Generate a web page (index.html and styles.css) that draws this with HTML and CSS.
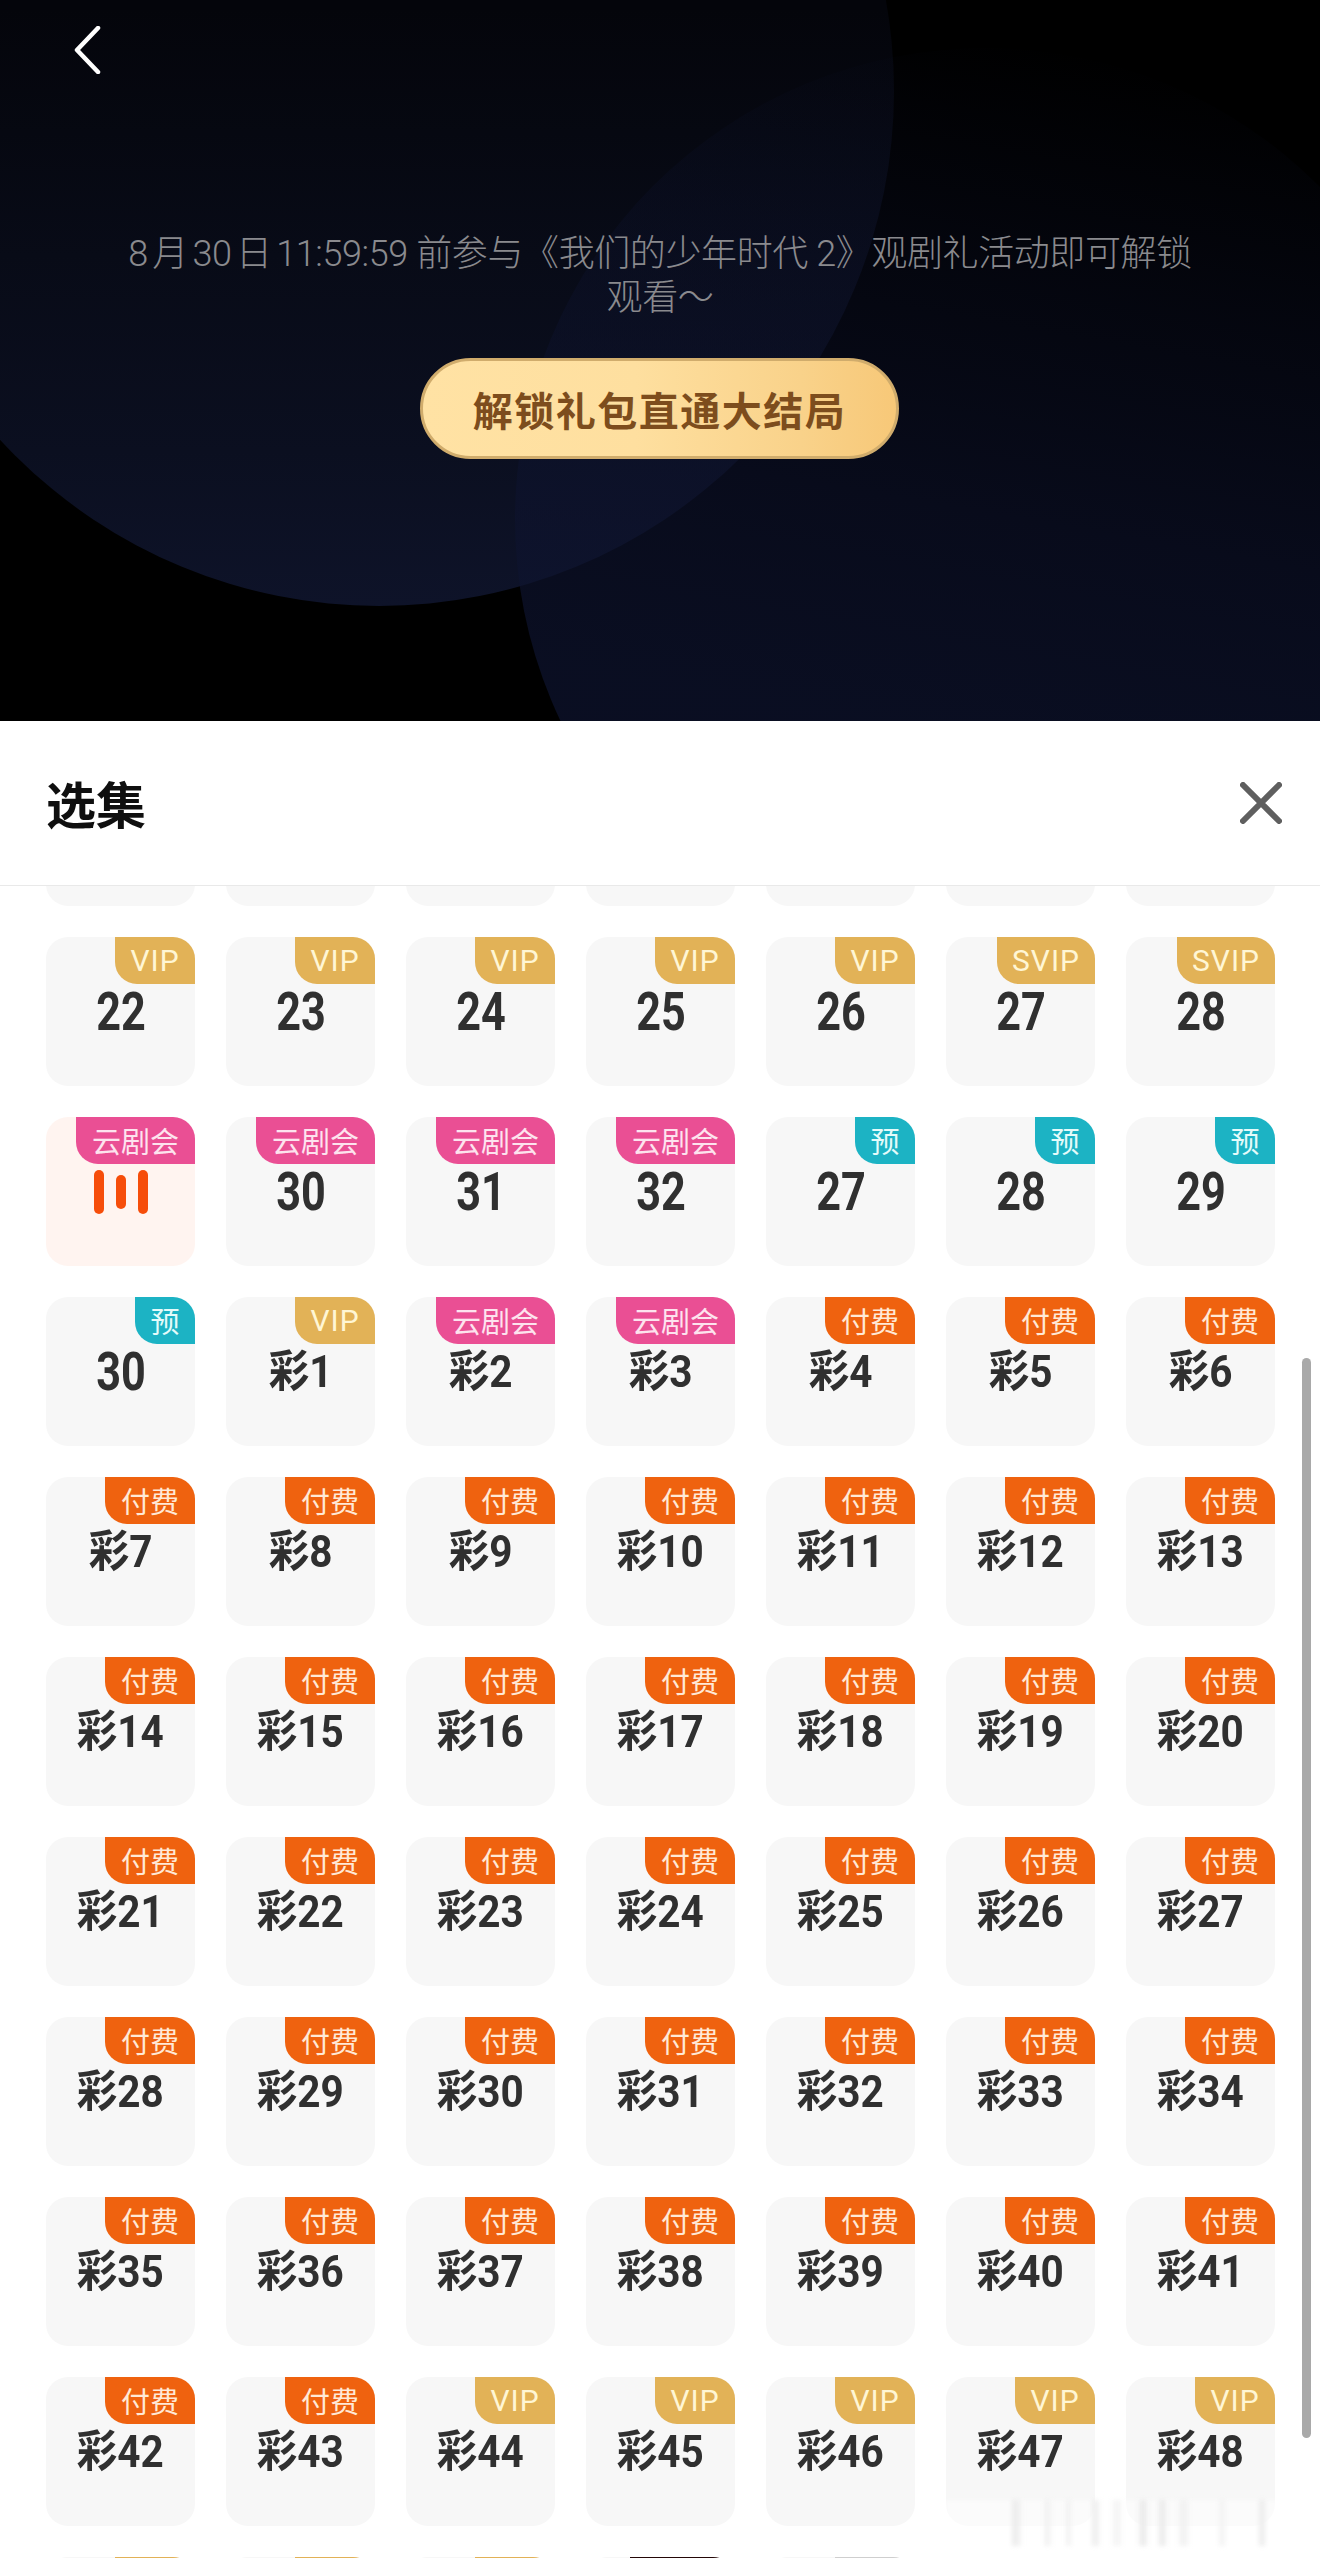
FILE: index.html
```html
<!DOCTYPE html>
<html lang="zh-CN">
<head>
<meta charset="utf-8">
<title>选集</title>
<link rel="stylesheet" href="styles.css">
</head>
<body>
<section class="hero">
  <div class="orb orb-left"></div>
  <div class="orb orb-right"></div>
  <button class="back" aria-label="返回">
    <svg width="28" height="48" viewBox="0 0 28 48"><path d="M25 2 L4 24 L25 46" class="back-line"/></svg>
  </button>
  <div class="unlock">
    <p class="unlock-text">8月30日11:59:59 前参与《我们的少年时代 2》观剧礼活动即可解锁观看～</p>
    <button class="unlock-btn">解锁礼包直通大结局</button>
  </div>
</section>
<section class="sheet">
  <header class="sheet-head">
    <h1 class="sheet-title">选集</h1>
    <button class="close" aria-label="关闭">
      <svg width="42" height="42" viewBox="0 0 42 42"><path d="M3 3 L39 39 M39 3 L3 39" class="close-line"/></svg>
    </button>
  </header>
  <div class="list">
    <div class="grid">
      <div class="ep"></div><div class="ep"></div><div class="ep"></div><div class="ep"></div><div class="ep"></div><div class="ep"></div><div class="ep"></div>

      <div class="ep"><span class="tag vip">VIP</span><span class="num">22</span></div>
      <div class="ep"><span class="tag vip">VIP</span><span class="num">23</span></div>
      <div class="ep"><span class="tag vip">VIP</span><span class="num">24</span></div>
      <div class="ep"><span class="tag vip">VIP</span><span class="num">25</span></div>
      <div class="ep"><span class="tag vip">VIP</span><span class="num">26</span></div>
      <div class="ep"><span class="tag svip">SVIP</span><span class="num">27</span></div>
      <div class="ep"><span class="tag svip">SVIP</span><span class="num">28</span></div>

      <div class="ep ep-on"><span class="tag club">云剧会</span><span class="bars"><i class="bar"></i><i class="bar bar-mid"></i><i class="bar"></i></span></div>
      <div class="ep"><span class="tag club">云剧会</span><span class="num">30</span></div>
      <div class="ep"><span class="tag club">云剧会</span><span class="num">31</span></div>
      <div class="ep"><span class="tag club">云剧会</span><span class="num">32</span></div>
      <div class="ep"><span class="tag pre">预</span><span class="num">27</span></div>
      <div class="ep"><span class="tag pre">预</span><span class="num">28</span></div>
      <div class="ep"><span class="tag pre">预</span><span class="num">29</span></div>

      <div class="ep"><span class="tag pre">预</span><span class="num">30</span></div>
      <div class="ep"><span class="tag vip">VIP</span><span class="num cai">彩1</span></div>
      <div class="ep"><span class="tag club">云剧会</span><span class="num cai">彩2</span></div>
      <div class="ep"><span class="tag club">云剧会</span><span class="num cai">彩3</span></div>
      <div class="ep"><span class="tag pay">付费</span><span class="num cai">彩4</span></div>
      <div class="ep"><span class="tag pay">付费</span><span class="num cai">彩5</span></div>
      <div class="ep"><span class="tag pay">付费</span><span class="num cai">彩6</span></div>

      <div class="ep"><span class="tag pay">付费</span><span class="num cai">彩7</span></div>
      <div class="ep"><span class="tag pay">付费</span><span class="num cai">彩8</span></div>
      <div class="ep"><span class="tag pay">付费</span><span class="num cai">彩9</span></div>
      <div class="ep"><span class="tag pay">付费</span><span class="num cai">彩10</span></div>
      <div class="ep"><span class="tag pay">付费</span><span class="num cai">彩11</span></div>
      <div class="ep"><span class="tag pay">付费</span><span class="num cai">彩12</span></div>
      <div class="ep"><span class="tag pay">付费</span><span class="num cai">彩13</span></div>

      <div class="ep"><span class="tag pay">付费</span><span class="num cai">彩14</span></div>
      <div class="ep"><span class="tag pay">付费</span><span class="num cai">彩15</span></div>
      <div class="ep"><span class="tag pay">付费</span><span class="num cai">彩16</span></div>
      <div class="ep"><span class="tag pay">付费</span><span class="num cai">彩17</span></div>
      <div class="ep"><span class="tag pay">付费</span><span class="num cai">彩18</span></div>
      <div class="ep"><span class="tag pay">付费</span><span class="num cai">彩19</span></div>
      <div class="ep"><span class="tag pay">付费</span><span class="num cai">彩20</span></div>

      <div class="ep"><span class="tag pay">付费</span><span class="num cai">彩21</span></div>
      <div class="ep"><span class="tag pay">付费</span><span class="num cai">彩22</span></div>
      <div class="ep"><span class="tag pay">付费</span><span class="num cai">彩23</span></div>
      <div class="ep"><span class="tag pay">付费</span><span class="num cai">彩24</span></div>
      <div class="ep"><span class="tag pay">付费</span><span class="num cai">彩25</span></div>
      <div class="ep"><span class="tag pay">付费</span><span class="num cai">彩26</span></div>
      <div class="ep"><span class="tag pay">付费</span><span class="num cai">彩27</span></div>

      <div class="ep"><span class="tag pay">付费</span><span class="num cai">彩28</span></div>
      <div class="ep"><span class="tag pay">付费</span><span class="num cai">彩29</span></div>
      <div class="ep"><span class="tag pay">付费</span><span class="num cai">彩30</span></div>
      <div class="ep"><span class="tag pay">付费</span><span class="num cai">彩31</span></div>
      <div class="ep"><span class="tag pay">付费</span><span class="num cai">彩32</span></div>
      <div class="ep"><span class="tag pay">付费</span><span class="num cai">彩33</span></div>
      <div class="ep"><span class="tag pay">付费</span><span class="num cai">彩34</span></div>

      <div class="ep"><span class="tag pay">付费</span><span class="num cai">彩35</span></div>
      <div class="ep"><span class="tag pay">付费</span><span class="num cai">彩36</span></div>
      <div class="ep"><span class="tag pay">付费</span><span class="num cai">彩37</span></div>
      <div class="ep"><span class="tag pay">付费</span><span class="num cai">彩38</span></div>
      <div class="ep"><span class="tag pay">付费</span><span class="num cai">彩39</span></div>
      <div class="ep"><span class="tag pay">付费</span><span class="num cai">彩40</span></div>
      <div class="ep"><span class="tag pay">付费</span><span class="num cai">彩41</span></div>

      <div class="ep"><span class="tag pay">付费</span><span class="num cai">彩42</span></div>
      <div class="ep"><span class="tag pay">付费</span><span class="num cai">彩43</span></div>
      <div class="ep"><span class="tag vip">VIP</span><span class="num cai">彩44</span></div>
      <div class="ep"><span class="tag vip">VIP</span><span class="num cai">彩45</span></div>
      <div class="ep"><span class="tag vip">VIP</span><span class="num cai">彩46</span></div>
      <div class="ep"><span class="tag vip">VIP</span><span class="num cai">彩47</span></div>
      <div class="ep"><span class="tag vip">VIP</span><span class="num cai">彩48</span></div>

      <div class="ep"><span class="tag tag-sliver peek-gold"></span></div>
      <div class="ep"><span class="tag tag-sliver peek-gold"></span></div>
      <div class="ep"><span class="tag tag-sliver peek-gold"></span></div>
      <div class="ep"><span class="tag tag-sliver tag-wide peek-dark"></span></div>
      <div class="ep"><span class="tag tag-sliver peek-grey"></span></div>
    </div>
    <div class="scrollbar"></div>
    <div class="watermark"></div>
  </div>
</section>
</body>
</html>
```
FILE: styles.css
```css
* { box-sizing: border-box; }

html, body {
  margin: 0;
  padding: 0;
}

body {
  width: 1320px;
  height: 2558px;
  overflow: hidden;
  display: flex;
  flex-direction: column;
  background: #fff;
  font-family: "Noto Sans CJK SC", "Liberation Sans", sans-serif;
}

button {
  border: 0;
  padding: 0;
  background: none;
  font: inherit;
}

/* Dark header with the two overlapping discs */
.hero {
  position: relative;
  flex: 0 0 721px;
  overflow: hidden;
  background: #000;
  padding-top: 232px;
}

.orb {
  position: absolute;
  border-radius: 50%;
}

.orb-left {
  left: -136px;
  top: -424px;
  width: 1030px;
  height: 1030px;
  background: linear-gradient(180deg, #04050b 42%, #080b17 66%, #0b0f20 85%, #0e1329 100%);
}

.orb-right {
  left: 515px;
  top: 48px;
  width: 942px;
  height: 942px;
  background: linear-gradient(190deg, rgba(10, 14, 34, 0) 6%, rgba(12, 17, 42, 0.35) 28%, rgba(13, 18, 44, 0.62) 50%, rgba(14, 20, 48, 0.7) 70%);
}

.back {
  position: absolute;
  left: 73px;
  top: 26px;
  width: 28px;
  height: 48px;
  display: block;
}

.back-line {
  fill: none;
  stroke: #fff;
  stroke-width: 4.5;
  stroke-linecap: round;
  stroke-linejoin: round;
}

.unlock {
  position: relative;
  display: flex;
  flex-direction: column;
  align-items: center;
}

.unlock-text {
  width: 1070px;
  margin: 0;
  font-family: "Roboto", "Noto Sans CJK SC", sans-serif;
  font-size: 36px;
  letter-spacing: -0.4px;
  line-height: 44px;
  font-weight: 300;
  color: #8a8a8e;
  text-align: center;
  text-autospace: normal;
}

.unlock-btn {
  width: 479px;
  height: 101px;
  margin-top: 38px;
  margin-left: -1px;
  border: 3px solid #d0ac6c;
  border-radius: 51px;
  background: linear-gradient(90deg, #ffe2a4 0%, #fedf9f 45%, #f9d28a 80%, #f7c878 100%);
  color: #7d4d1d;
  font-size: 40px;
  font-weight: 700;
  letter-spacing: 1.5px;
  text-align: center;
}

/* Bottom sheet */
.sheet {
  flex: 1;
  display: flex;
  flex-direction: column;
  min-height: 0;
  background: #fff;
}

.sheet-head {
  flex: 0 0 165px;
  display: flex;
  align-items: center;
  justify-content: space-between;
  padding: 0 38px 0 46px;
  border-bottom: 1px solid #e9e9e9;
}

.sheet-title {
  margin: 0 0 3px;
  font-size: 50px;
  line-height: 56px;
  font-weight: 700;
  color: #0f0f0f;
}

.close {
  display: block;
  width: 42px;
  height: 42px;
}

.close-line {
  fill: none;
  stroke: #5f5f5f;
  stroke-width: 6;
  stroke-linecap: round;
}

.list {
  position: relative;
  flex: 1;
  min-height: 0;
  overflow: hidden;
}

.grid {
  display: grid;
  grid-template-columns: repeat(7, 149px);
  grid-auto-rows: 149px;
  gap: 31px;
  margin-top: -129px;
  padding-left: 46px;
}

.ep {
  position: relative;
  display: flex;
  align-items: center;
  justify-content: center;
  border-radius: 22px;
  background: #f7f7f7;
}

.ep-on {
  background: #fff4f0;
}

.tag {
  position: absolute;
  top: 0;
  right: 0;
  height: 47px;
  display: flex;
  align-items: center;
  justify-content: center;
  border-radius: 0 22px 0 22px;
  font-size: 29px;
  line-height: 47px;
  white-space: nowrap;
}

.vip, .svip {
  background: #e2b257;
  color: #fff6d4;
  font-family: "Roboto", "Liberation Sans", sans-serif;
  font-size: 30px;
  letter-spacing: 1px;
}

.vip { width: 80px; }
.svip { width: 98px; }

.club {
  width: 119px;
  background: #ea4f94;
  color: #fde3ee;
}

.pre {
  width: 60px;
  background: #1cb3c4;
  color: #e4fbfa;
}

.pay {
  width: 90px;
  background: #ef620f;
  color: #ffe9d6;
}

.tag-sliver { width: 80px; }
.tag-wide { width: 105px; }
.peek-gold { background: #e2b257; }
.peek-dark { background: #240808; }
.peek-grey { background: #cfcfcf; }

.num {
  display: inline-block;
  font-family: "Roboto", "Noto Sans CJK SC", sans-serif;
  font-size: 54px;
  line-height: 60px;
  font-weight: 700;
  color: #303030;
  white-space: nowrap;
  transform: scaleX(0.8);
}

.cai {
  font-size: 44px;
  transform: scaleX(0.92);
}

.bars {
  display: flex;
  align-items: center;
  gap: 12px;
}

.bar {
  display: block;
  width: 10px;
  height: 44px;
  border-radius: 5px;
  background: #f64d0a;
}

.bar-mid {
  height: 34px;
}

.scrollbar {
  position: absolute;
  left: 1302px;
  top: 472px;
  width: 9px;
  height: 1080px;
  border-radius: 5px;
  background: #a9a9a9;
}

.watermark {
  position: absolute;
  left: 945px;
  top: 1614px;
  width: 360px;
  height: 46px;
  filter: blur(2px);
  background:
    linear-gradient(90deg,
      transparent 0, transparent 65px, #e9e9e9 70px, transparent 78px,
      transparent 98px, #efefef 102px, transparent 108px,
      transparent 120px, #efefef 123px, transparent 128px,
      transparent 145px, #ebebeb 150px, transparent 156px,
      transparent 166px, #f2f2f2 172px, transparent 178px,
      transparent 192px, #e7e7e7 198px, transparent 204px,
      transparent 212px, #e7e7e7 217px, transparent 223px,
      transparent 232px, #efefef 238px, transparent 246px,
      transparent 272px, #f1f1f1 277px, transparent 282px,
      transparent 312px, #e9e9e9 317px, transparent 322px),
    rgba(255, 255, 255, 0.5);
}
```
